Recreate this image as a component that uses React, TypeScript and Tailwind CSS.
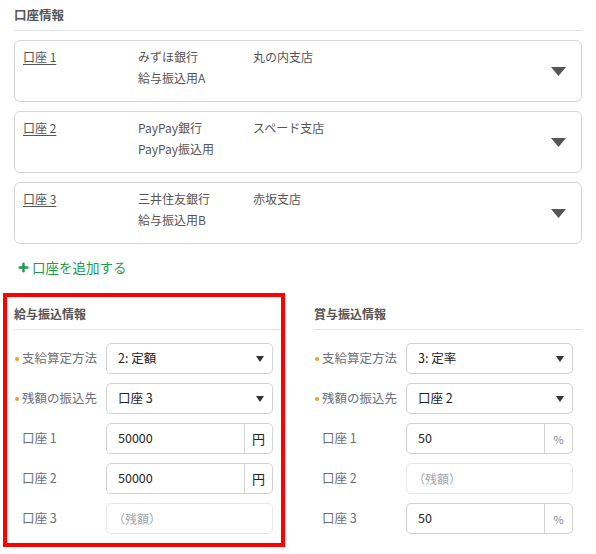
import { Plus } from "lucide-react";

const accounts = [
    { name: "口座 1", bank: "みずほ銀行", branch: "丸の内支店", memo: "給与振込用A" },
    { name: "口座 2", bank: "PayPay銀行", branch: "スペード支店", memo: "PayPay振込用" },
    { name: "口座 3", bank: "三井住友銀行", branch: "赤坂支店", memo: "給与振込用B" },
];

function Caret() {
    return (
        <svg width="8" height="6" viewBox="0 0 8 6" className="text-[#333]">
            <path d="M0 0 H8 L4 6 Z" fill="currentColor" />
        </svg>
    );
}

function RequiredLabel({ text }: { text: string }) {
    return (
        <div className="w-[92px] flex items-center text-[12.5px] text-[#6b6f78]">
            <span className="w-[4px] h-[4px] rounded-full bg-[#f39b2b] mr-[3px] ml-[1px]" />
            {text}
        </div>
    );
}

function PlainLabel({ text }: { text: string }) {
    return <div className="w-[92px] pl-[8px] text-[12.5px] text-[#6b6f78]">{text}</div>;
}

function SelectBox({ value }: { value: string }) {
    return (
        <div className="w-[167px] h-[31px] border border-[#cfd2d6] rounded-[5px] flex items-center justify-between pl-[11px] pr-[8px] text-[12.5px] text-[#222]">
            <span>{value}</span>
            <Caret />
        </div>
    );
}

function AddonInput({ value, unit, unitClass }: { value: string; unit: string; unitClass: string }) {
    return (
        <div className="w-[167px] h-[31px] border border-[#cfd2d6] rounded-[5px] flex items-stretch text-[12.5px]">
            <div className="flex-1 flex items-center pl-[11px] text-[#222]">{value}</div>
            <div className={"w-[28px] border-l border-[#cfd2d6] flex items-center justify-center " + unitClass}>{unit}</div>
        </div>
    );
}

function RemainderInput() {
    return (
        <div className="w-[167px] h-[31px] border border-[#e6e8eb] rounded-[5px] flex items-center pl-[6px] text-[12px] text-[#a3a6ab]">
            （残額）
        </div>
    );
}

function Row({ label, children }: { label: React.ReactNode; children: React.ReactNode }) {
    return (
        <div className="flex items-center">
            {label}
            {children}
        </div>
    );
}

export default function App() {
    return (
        <div className="w-[596px] h-[554px] bg-white overflow-hidden" style={{ fontFamily: '"Noto Sans CJK JP", "Noto Sans", sans-serif' }}>
            <div className="pl-[14px] pr-[14px] pt-[5px]">
                <h2 className="text-[12.5px] font-bold text-[#555] leading-[20px]">口座情報</h2>
                <div className="h-px bg-[#e3e4e8] mt-[5px] mb-[9px]" />
                <div className="flex flex-col gap-[9px]">
                    {accounts.map((a) => (
                        <div key={a.name} className="h-[62px] border border-[#d6d6d6] rounded-[6px] flex items-center pl-[8px] pr-[15px] text-[12px] text-[#555]">
                            <div className="flex-1 self-start pt-[7px] grid grid-cols-[115px_115px_1fr] gap-y-[3px] leading-[18px]">
                                <span className="underline underline-offset-2">{a.name}</span>
                                <span>{a.bank}</span>
                                <span>{a.branch}</span>
                                <span />
                                <span>{a.memo}</span>
                                <span />
                            </div>
                            <svg width="15" height="9" viewBox="0 0 15 9" className="text-[#555] mt-[1px]">
                                <path d="M0 0 H15 L7.5 9 Z" fill="currentColor" />
                            </svg>
                        </div>
                    ))}
                </div>
                <div className="flex items-center gap-[2px] mt-[13px] ml-[3px] text-[13.5px] text-[#1f9b4e]">
                    <Plus className="w-[13px] h-[13px]" strokeWidth={4.5} />
                    <span>口座を追加する</span>
                </div>
            </div>

            <div className="flex mt-[16px] pl-[3px]">
                <div className="w-[282px] h-[254px] border-4 border-[#ff0000] pl-[7px] pt-[7px]">
                    <h3 className="text-[12px] font-bold text-[#555] leading-[20px]">給与振込情報</h3>
                    <div className="h-px bg-[#e3e4e8] mt-[5px] mb-[13px]" />
                    <div className="flex flex-col gap-[9px]">
                        <Row label={<RequiredLabel text="支給算定方法" />}>
                            <SelectBox value="2: 定額" />
                        </Row>
                        <Row label={<RequiredLabel text="残額の振込先" />}>
                            <SelectBox value="口座 3" />
                        </Row>
                        <Row label={<PlainLabel text="口座 1" />}>
                            <AddonInput value="50000" unit="円" unitClass="text-[13px] text-[#222]" />
                        </Row>
                        <Row label={<PlainLabel text="口座 2" />}>
                            <AddonInput value="50000" unit="円" unitClass="text-[13px] text-[#222]" />
                        </Row>
                        <Row label={<PlainLabel text="口座 3" />}>
                            <RemainderInput />
                        </Row>
                    </div>
                </div>

                <div className="w-[268px] ml-[29px] pt-[11px]">
                    <h3 className="text-[12px] font-bold text-[#555] leading-[20px]">賞与振込情報</h3>
                    <div className="h-px bg-[#e3e4e8] mt-[5px] mb-[13px]" />
                    <div className="flex flex-col gap-[9px]">
                        <Row label={<RequiredLabel text="支給算定方法" />}>
                            <SelectBox value="3: 定率" />
                        </Row>
                        <Row label={<RequiredLabel text="残額の振込先" />}>
                            <SelectBox value="口座 2" />
                        </Row>
                        <Row label={<PlainLabel text="口座 1" />}>
                            <AddonInput value="50" unit="%" unitClass="text-[11px] text-[#888]" />
                        </Row>
                        <Row label={<PlainLabel text="口座 2" />}>
                            <RemainderInput />
                        </Row>
                        <Row label={<PlainLabel text="口座 3" />}>
                            <AddonInput value="50" unit="%" unitClass="text-[11px] text-[#888]" />
                        </Row>
                    </div>
                </div>
            </div>
        </div>
    );
}
